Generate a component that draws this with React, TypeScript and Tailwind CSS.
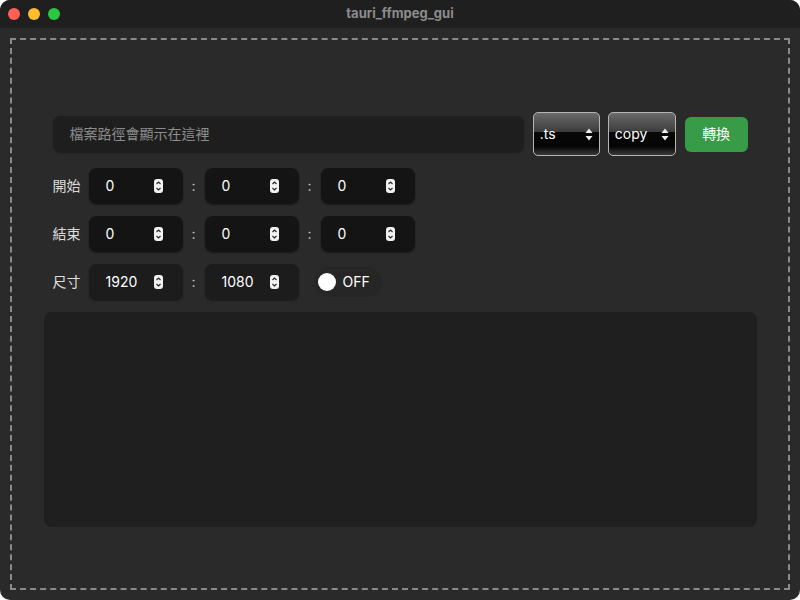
import React from "react";

const font = { fontFamily: 'Inter, "Noto Sans CJK TC", sans-serif' };

function Spin() {
  return (
    <svg width="9" height="14" viewBox="0 0 9 14">
      <rect x="0" y="0" width="9" height="14" rx="3" fill="#f2f2f2" />
      <path d="M2.5 5 L4.5 3 L6.5 5" stroke="#222" strokeWidth="1.1" fill="none" />
      <path d="M2.5 9 L4.5 11 L6.5 9" stroke="#222" strokeWidth="1.1" fill="none" />
    </svg>
  );
}

function NumBox({ v }: { v: string }) {
  return (
    <div className="flex h-9 w-[94px] items-center justify-between rounded-lg bg-[#141414] pl-[17px] pr-[20px] text-sm text-white shadow-[0_1px_2px_rgba(0,0,0,0.4)]">
      <span>{v}</span>
      <Spin />
    </div>
  );
}

function NumBox2({ v }: { v: string }) {
  return (
    <div className="flex h-9 w-[94px] items-center justify-between rounded-lg bg-[#1c1c1c] pl-[17px] pr-[20px] text-sm text-white shadow-[0_1px_2px_rgba(0,0,0,0.4)]">
      <span>{v}</span>
      <Spin />
    </div>
  );
}

function Colon() {
  return <div className="w-[22px] text-center text-sm text-[#ccc]">:</div>;
}

function Sel({ label, w }: { label: string; w: string }) {
  return (
    <div
      className={`relative flex h-[44px] ${w} items-center justify-between overflow-hidden rounded-[5px] border border-[#b5b5b5] px-[6px] text-sm text-white`}
      style={{
        background:
          "linear-gradient(to bottom, #6a6a6a 0%, #3c3c3c 45%, #080808 46%, #050505 80%, #3a3a3a 100%)",
      }}
    >
      <span className="relative">{label}</span>
      <svg width="8" height="13" viewBox="0 0 8 13" className="relative">
        <path d="M4 0.5 L7.5 5 L0.5 5 Z" fill="#eee" />
        <path d="M4 12.5 L7.5 8 L0.5 8 Z" fill="#eee" />
      </svg>
    </div>
  );
}

function Row({ label, children }: { label: string; children: React.ReactNode }) {
  return (
    <div className="flex h-9 items-center">
      <div className="w-9 text-sm text-[#ddd]">{label}</div>
      {children}
    </div>
  );
}

export default function App() {
  return (
    <div className="h-[600px] w-[800px] bg-white" style={font}>
      <div className="flex h-full w-full flex-col overflow-hidden rounded-[10px] bg-[#2a2a2a]">
        <div className="relative flex h-[28px] items-center justify-center bg-[#1f1f1f]">
          <div className="absolute left-[8px] top-[8px] flex gap-[8px]">
            <div className="h-3 w-3 rounded-full bg-[#fe5f57]" />
            <div className="h-3 w-3 rounded-full bg-[#febc2e]" />
            <div className="h-3 w-3 rounded-full bg-[#28c840]" />
          </div>
          <div className="text-[13px] font-bold text-[#8c8c8c]">tauri_ffmpeg_gui</div>
        </div>
        <div className="flex-1 px-[10px] pb-[10px] pt-[10px]">
          <div className="flex h-full flex-col items-center border-2 border-dashed border-[#8a8a8a] pt-[72px]">
            <div className="flex w-[713px] flex-col gap-3">
              <div className="flex flex-col gap-3 px-[9px]">
                <div className="flex items-center">
                  <div className="flex h-9 w-[473px] items-center rounded-lg bg-[#1e1e1e] pl-[17px] text-sm text-[#8c8c8c] shadow-[0_1px_2px_rgba(0,0,0,0.35)]">
                    檔案路徑會顯示在這裡
                  </div>
                  <div className="ml-[9px]">
                    <Sel label=".ts" w="w-[67px]" />
                  </div>
                  <div className="ml-[8px]">
                    <Sel label="copy" w="w-[68px]" />
                  </div>
                  <div className="ml-[9px] flex h-[35px] w-[63px] items-center justify-center rounded-md bg-[#389b47] text-sm text-white">
                    轉換
                  </div>
                </div>
                <Row label="開始">
                  <NumBox v="0" />
                  <Colon />
                  <NumBox v="0" />
                  <Colon />
                  <NumBox v="0" />
                </Row>
                <Row label="結束">
                  <NumBox v="0" />
                  <Colon />
                  <NumBox v="0" />
                  <Colon />
                  <NumBox v="0" />
                </Row>
                <Row label="尺寸">
                  <NumBox2 v="1920" />
                  <Colon />
                  <NumBox2 v="1080" />
                  <div className="ml-[15px] flex h-[30px] items-center gap-[7px] rounded-full bg-[#262626] pl-[4px] pr-[12px] text-sm text-white">
                    <div className="h-[18px] w-[18px] rounded-full bg-white" />
                    <span>OFF</span>
                  </div>
                </Row>
              </div>
              <div className="h-[215px] rounded-lg bg-[#1f1f1f]" />
            </div>
          </div>
        </div>
      </div>
    </div>
  );
}
